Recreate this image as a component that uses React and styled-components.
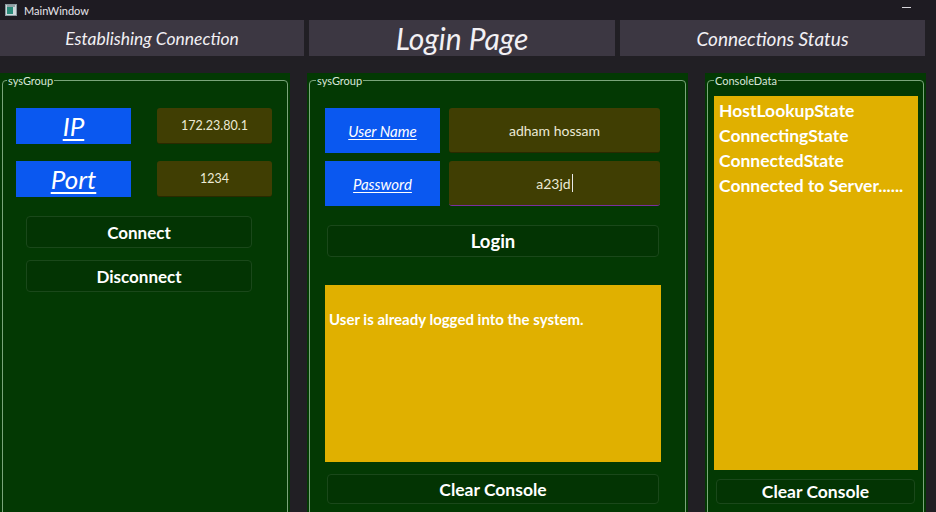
import React from 'react';
import styled, { createGlobalStyle } from 'styled-components';

const GlobalStyle = createGlobalStyle`
  html, body {
    margin: 0;
    padding: 0;
    background: #211f24;
    overflow: hidden;
  }
  body {
    font-family: Lato, "Noto Sans", sans-serif;
  }
`;

const Window = styled.div`
  width: 936px;
  height: 512px;
  display: flex;
  flex-direction: column;
  background: #211f24;
  overflow: hidden;
`;

const TitleBar = styled.div`
  flex-shrink: 0;
  height: 20px;
  display: flex;
  align-items: center;
  padding: 0 0 0 5px;
  background: #1e1b22;
  color: #e6e4ea;
  font-size: 11px;
`;

const TitleText = styled.span`
  margin-left: 7px;
  flex: 1;
`;

const Minimize = styled.span`
  width: 9px;
  height: 1px;
  background: #d8d6dc;
  margin-right: 25px;
  margin-top: -6px;
`;

const HeaderRow = styled.div`
  flex-shrink: 0;
  display: grid;
  grid-template-columns: 304px 306px 305px;
  column-gap: 5px;
  height: 36px;
`;

const Header = styled.div`
  background: #3c3742;
  color: #f2f0f4;
  font-style: italic;
  font-size: ${(p) => p.size || 18}px;
  display: flex;
  align-items: center;
  justify-content: center;
`;

const PanelRow = styled.div`
  margin-top: 17px;
  display: grid;
  grid-template-columns: 290px 381px 221px;
  column-gap: 17px;
  flex: 1;
  min-height: 0;
  overflow: hidden;
`;

const Panel = styled.div`
  background: #033903;
  padding: 1px 2px 0 2px;
  display: flex;
  align-items: flex-start;
`;

const Group = styled.fieldset`
  margin: 0;
  flex: 1;
  border: 1px solid #7aa57a;
  border-radius: 4px;
  padding: ${(p) => p.pad || '21px 0 0 13px'};
  min-width: 0;
  height: 460px;
  box-sizing: border-box;
`;

const Legend = styled.legend`
  color: #d9e6d9;
  font-size: 11px;
  line-height: 13px;
  padding: 0 1px;
  margin-left: ${(p) => p.offset}px;
`;

const FieldGrid = styled.div`
  display: grid;
  grid-template-columns: ${(p) => p.cols};
  grid-auto-rows: ${(p) => p.rowH}px;
  column-gap: ${(p) => p.colGap}px;
  row-gap: ${(p) => p.rowGap}px;
`;

const Label = styled.div`
  background: #0a58f0;
  color: #ffffff;
  font-style: italic;
  text-decoration: underline;
  text-decoration-thickness: ${(p) => (p.size > 20 ? 2 : 1)}px;
  text-underline-offset: ${(p) => (p.size > 20 ? 3 : 2)}px;
  font-size: ${(p) => p.size}px;
  display: flex;
  align-items: center;
  justify-content: center;
`;

const Input = styled.div`
  background: #403e03;
  border-radius: 3px;
  border-bottom: 1px solid ${(p) => (p.focus ? '#7a2fa0' : '#2a2a00')};
  color: #ecead6;
  font-size: ${(p) => p.size || 12.5}px;
  display: flex;
  align-items: center;
  justify-content: center;
`;

const Caret = styled.span`
  display: inline-block;
  width: 1px;
  height: 18px;
  background: #e8e8e8;
  margin-left: 1px;
`;

const Button = styled.button`
  display: flex;
  align-items: center;
  justify-content: center;
  box-sizing: border-box;
  width: ${(p) => p.w}px;
  height: ${(p) => p.h || 32}px;
  margin: ${(p) => p.m || '0'};
  background: #033403;
  border: 1px solid #1a481a;
  border-radius: 4px;
  color: #ffffff;
  font-family: Lato, "Noto Sans", sans-serif;
  font-weight: 700;
  font-size: ${(p) => p.size || 17}px;
  padding: 0;
`;

const Console = styled.div`
  background: #e0b000;
  color: #ffffff;
  font-weight: 700;
  box-sizing: border-box;
  width: ${(p) => p.w}px;
  height: ${(p) => p.h}px;
  margin: ${(p) => p.m || '0'};
  padding: ${(p) => p.pad || '0'};
  font-size: ${(p) => p.size || 15}px;
  line-height: ${(p) => p.lh || 20}px;
  white-space: nowrap;
`;

function AppIcon() {
  return (
    <svg width="12" height="12" viewBox="0 0 12 12">
      <rect x="0.5" y="0.5" width="11" height="11" fill="#cfd8dc" stroke="#8a9aa0" />
      <rect x="2" y="3" width="6" height="7" fill="#2a8a7a" />
      <rect x="2" y="1.5" width="8" height="1" fill="#5a6a70" />
    </svg>
  );
}

function App() {
  const consoleLines = ['HostLookupState', 'ConnectingState', 'ConnectedState', 'Connected to Server......'];

  return (
    <Window>
      <GlobalStyle />
      <TitleBar>
        <AppIcon />
        <TitleText>MainWindow</TitleText>
        <Minimize />
      </TitleBar>

      <HeaderRow>
        <Header size={17.5}>Establishing Connection</Header>
        <Header size={30}>Login Page</Header>
        <Header size={19}>Connections Status</Header>
      </HeaderRow>

      <PanelRow>
        {/* Connection group */}
        <Panel>
          <Group>
            <Legend offset={-9}>sysGroup</Legend>
            <FieldGrid cols="115px 115px" rowH={36} colGap={26} rowGap={17}>
              <Label size={26}>IP</Label>
              <Input>172.23.80.1</Input>
              <Label size={26}>Port</Label>
              <Input>1234</Input>
            </FieldGrid>
            <Button w={226} m="19px 0 0 10px">Connect</Button>
            <Button w={226} m="12px 0 0 10px">Disconnect</Button>
          </Group>
        </Panel>

        {/* Login group */}
        <Panel>
          <Group pad="21px 0 0 15px">
            <Legend offset={-9}>sysGroup</Legend>
            <FieldGrid cols="115px 211px" rowH={45} colGap={9} rowGap={8}>
              <Label size={15}>User Name</Label>
              <Input size={14}>adham hossam</Input>
              <Label size={15}>Password</Label>
              <Input size={14} focus>
                a23jd<Caret />
              </Input>
            </FieldGrid>
            <Button w={332} size={18.5} m="19px 0 0 2px">Login</Button>
            <Console w={336} h={177} m="28px 0 0 0" pad="24px 4px" lh={20}>
              User is already logged into the system.
            </Console>
            <Button w={332} h={30} size={17.5} m="12px 0 0 2px">Clear Console</Button>
          </Group>
        </Panel>

        {/* Console group */}
        <Panel>
          <Group pad="9px 0 0 6px">
            <Legend offset={0}>ConsoleData</Legend>
            <Console w={204} h={374} pad="2px 5px" size={17.5} lh={25}>
              {consoleLines.map((line) => (
                <div key={line}>{line}</div>
              ))}
            </Console>
            <Button w={199} h={25} size={17.5} m="9px 0 0 2px">Clear Console</Button>
          </Group>
        </Panel>
      </PanelRow>
    </Window>
  );
}

export default App;
